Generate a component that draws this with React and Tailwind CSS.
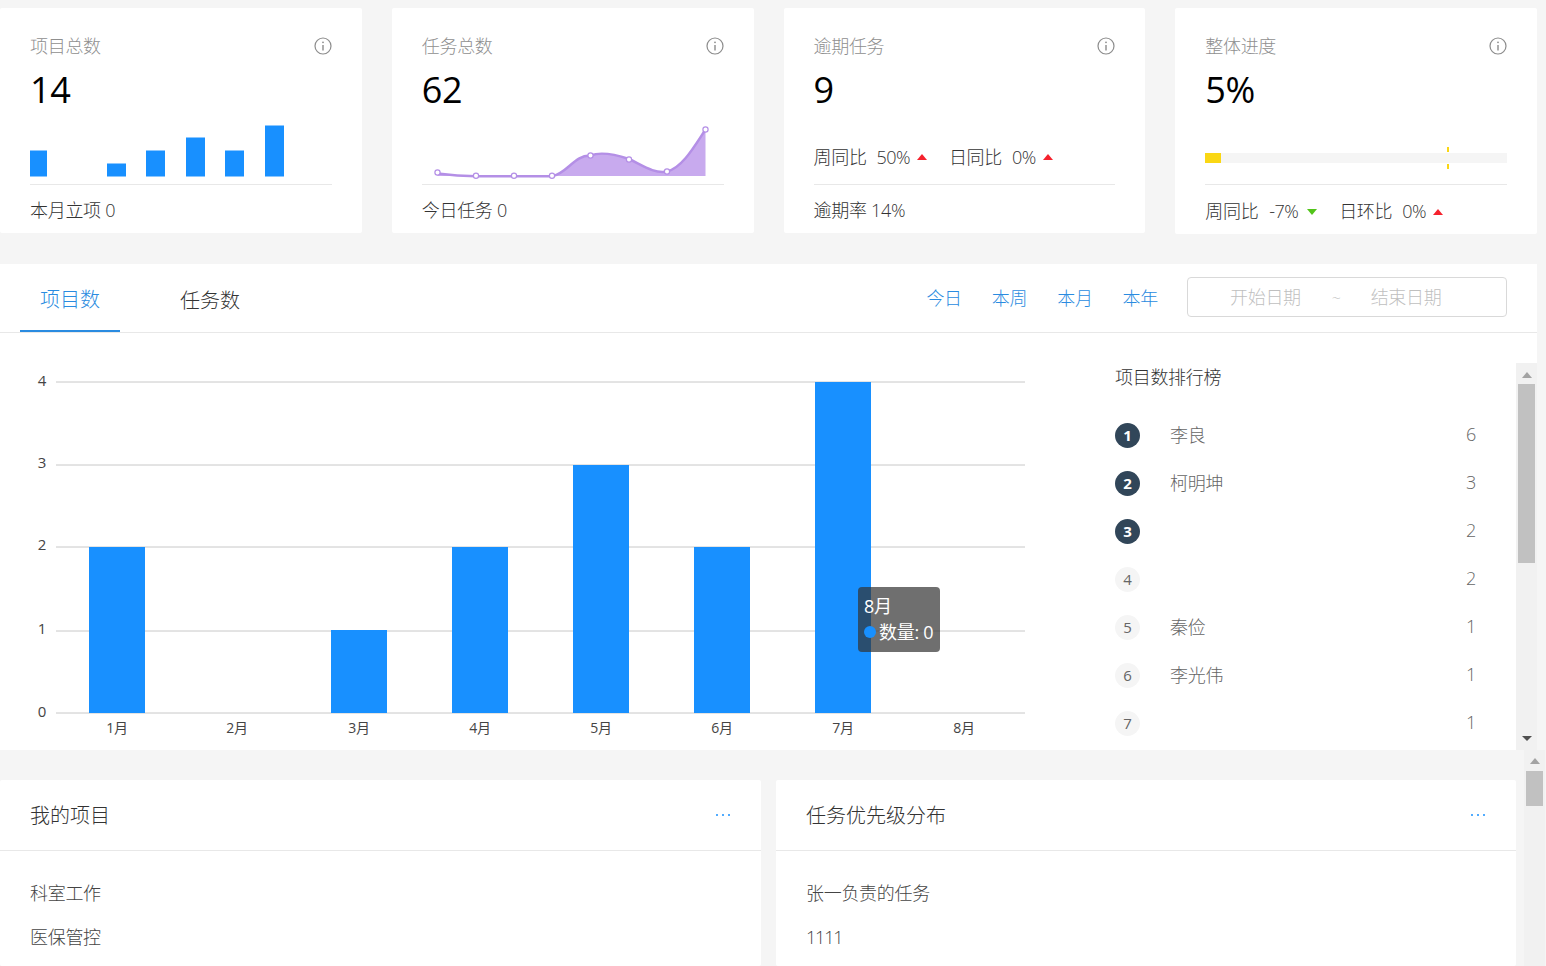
const F = "font-['Open_Sans','Noto_Sans_CJK_SC',sans-serif] tracking-[-0.3px]";

function Info() {
  return (
    <svg width="18" height="18" viewBox="0 0 18 18" fill="none" stroke="#8c8c8c" strokeWidth="1.2">
      <circle cx="9" cy="9" r="8" />
      <path d="M9 8v5.5" strokeWidth="1.4" />
      <circle cx="9" cy="5.3" r="0.9" fill="#8c8c8c" stroke="none" />
    </svg>
  );
}

function Up() {
  return <span className="inline-block w-0 h-0 border-x-[5px] border-x-transparent border-b-[6px] border-b-[#f5222d]" />;
}
function Down() {
  return <span className="inline-block w-0 h-0 border-x-[5px] border-x-transparent border-t-[6px] border-t-[#52c41a]" />;
}

function Card({ title, value, chart, footer, tall }) {
  return (
    <div className={`bg-white rounded-[2px] px-[30px] flex flex-col ${tall ? "h-[226px]" : "h-[225px]"}`}>
      <div className="flex items-center justify-between h-[24px] mt-[26px]">
        <span className="text-[18px] leading-[24px] text-[#8f8f8f] font-light">{title}</span>
        <Info />
      </div>
      <div className="h-[48px] mt-[8px] text-[36px] leading-[48px] text-black">{value}</div>
      <div className="h-[71px] border-b border-[#e8e8e8]">{chart}</div>
      <div className="flex-1 flex items-center text-[18px] text-[#333] font-light pt-[3px]">{footer}</div>
    </div>
  );
}

function MiniBars() {
  const bars = [[30, 26, 17], [107, 13, 19], [146, 26, 19], [186, 39, 19], [225, 26, 19], [265, 51, 19]];
  return (
    <svg width="302" height="70" className="block">
      {bars.map(([x, h, w]) => <rect key={x} x={x - 30} y={62.5 - h} width={w} height={h} fill="#1890ff" />)}
    </svg>
  );
}

function MiniArea() {
  const line = "M15.5 51.5 C28 53 41 54 54 54.2 L130 54.2 C145 52 152 33 168.5 33.5 C180 29 195 33 207 37 C220 43 232 52 245 49.5 C260 46 272 25 283.5 7.5";
  const pts = [[15.5, 50.5], [54, 53.8], [92, 53.8], [130, 53.8], [168.5, 33.5], [207, 37.5], [245, 49.5], [283.5, 7.5]];
  return (
    <svg width="302" height="70" className="block">
      <g transform="translate(0 8)">
        <path d={line + " L283.5 54 L15.5 54 Z"} fill="#c8aaee" />
        <path d={line} fill="none" stroke="#b48fe6" strokeWidth="2.5" />
        {pts.map(([x, y]) => <circle key={x} cx={x} cy={y} r="2.6" fill="#fff" stroke="#b48fe6" strokeWidth="1.2" />)}
      </g>
    </svg>
  );
}

function Stat({ label, value, up, wide }) {
  return (
    <span className="inline-flex items-center">
      <span>{label}</span>
      <span className={`tracking-[-0.6px] ${wide ? "ml-[11px]" : "ml-[10px]"}`}>{value}</span>
      <span className={`inline-flex ${wide ? "ml-[9px]" : "ml-[7px]"}`}>{up ? <Up /> : <Down />}</span>
    </span>
  );
}

function Progress() {
  return (
    <div className="relative h-full">
      <div className="absolute left-0 right-0 top-[39px] h-[10px] bg-[#f5f5f5]">
        <div className="w-[16px] h-[10px] bg-[#fad714]" />
      </div>
      <div className="absolute left-[242px] top-[33px] w-[2px] h-[22px] bg-[linear-gradient(#fad714_0,#fad714_5px,transparent_5px,transparent_17px,#fad714_17px)]" />
    </div>
  );
}

function BarChart() {
  const ticks = [[4, 382, 386], [3, 465, 468], [2, 547, 550], [1, 631, 634], [0, 713, 717]];
  const bars = [[89, 547], [331, 630], [452, 547], [573, 465], [694, 547], [815, 382]];
  const labels = [[117, "1月"], [237, "2月"], [359, "3月"], [480, "4月"], [601, "5月"], [722, "6月"], [843, "7月"], [964, "8月"]];
  return (
    <svg width="1060" height="417" viewBox="0 333 1060 417" className="block">
      {ticks.map(([v, y, ty]) => (
        <g key={v}>
          <line x1="56" x2="1025" y1={y} y2={y} stroke="#c8c8c8" />
          <text x="42" y={ty} textAnchor="middle" fontSize="15" fill="#444">{v}</text>
        </g>
      ))}
      {bars.map(([x, y]) => <rect key={x} x={x} y={y} width="56" height={713 - y} fill="#1890ff" />)}
      {labels.map(([x, t]) => <text key={t} x={x} y="733" textAnchor="middle" fontSize="14" fill="#444">{t}</text>)}
    </svg>
  );
}

function Rank({ n, name, v }) {
  const top = n <= 3;
  return (
    <div className="h-[48px] flex items-center shrink-0 text-[18px] text-[#666] font-light">
      <span className={`w-[25px] h-[25px] rounded-full flex items-center justify-center text-[15px] ${top ? "bg-[#314659] text-white font-bold" : "bg-[#f5f5f5] text-[#666] font-normal"}`}>{n}</span>
      <span className="ml-[30px] flex-1">{name}</span>
      <span className="mr-[40px] mt-[-2px]">{v}</span>
    </div>
  );
}

function ScrollBar({ thumbH, arrowTop, arrowDown }) {
  return (
    <div className="w-[21px] shrink-0 h-full bg-[#f1f1f1] relative">
      <span className={`absolute left-1/2 -translate-x-1/2 ${arrowTop} w-0 h-0 border-x-[5px] border-x-transparent border-b-[6px] border-b-[#a3a3a3]`} />
      <div className="absolute left-[2px] right-[2px] top-[21px] bg-[#c1c1c1]" style={{ height: thumbH }} />
      {arrowDown && <span className="absolute left-1/2 -translate-x-1/2 bottom-[9px] w-0 h-0 border-x-[5px] border-x-transparent border-t-[5px] border-t-[#505050]" />}
    </div>
  );
}

function Panel({ title, rows, cls }) {
  return (
    <div className={`bg-white rounded-[2px] ${cls}`}>
      <div className="h-[71px] border-b border-[#e8e8e8] pl-[30px] pr-[31px] flex items-center justify-between">
        <span className="text-[20px] text-[#333] font-light tracking-[0px] mt-[2px]">{title}</span>
        <span className="flex gap-[4px]">
          <i className="w-[2px] h-[2px] rounded-full bg-[#1890ff]" />
          <i className="w-[2px] h-[2px] rounded-full bg-[#1890ff]" />
          <i className="w-[2px] h-[2px] rounded-full bg-[#1890ff]" />
        </span>
      </div>
      <div className="px-[30px] pt-[20px]">
        {rows.map((r) => <div key={r} className={`h-[44px] flex items-center text-[18px] text-[#444] font-light ${r === "1111" ? "tracking-[-1.2px]" : ""}`}>{r}</div>)}
      </div>
    </div>
  );
}

export default function App() {
  return (
    <div className={`${F} w-[1546px] h-[966px] overflow-hidden bg-[#f5f5f5] relative`}>
      <div className="w-[1537px] pt-[8px] grid grid-cols-4 gap-x-[30px] items-start">
        <Card title="项目总数" value="14" chart={<MiniBars />} footer="本月立项 0" />
        <Card title="任务总数" value="62" chart={<MiniArea />} footer="今日任务 0" />
        <Card title="逾期任务" value="9"
          chart={<div className="h-full flex items-end pb-[15px] gap-[22px] text-[18px] text-[#333] font-light leading-[24px]"><Stat label="周同比" value="50%" up /><Stat label="日同比" value="0%" up /></div>}
          footer="逾期率 14%" />
        <Card tall title="整体进度" value="5%" chart={<Progress />}
          footer={<div className="flex gap-[22px] pt-[1px]"><Stat label="周同比" value="-7%" wide /><Stat label="日环比" value="0%" up /></div>} />
      </div>

      <div className="w-[1537px] h-[486px] mt-[30px] bg-white">
        <div className="h-[69px] border-b border-[#e8e8e8] pl-[20px] pr-[30px] flex items-end justify-between">
          <div className="flex text-[20px] font-light tracking-[0px]">
            <div className="w-[100px] h-[69px] pt-[7px] flex items-center justify-center text-[#2a8be0] border-b-[2px] border-[#2a8be0] -mb-px">项目数</div>
            <div className="w-[100px] h-[69px] pt-[7px] ml-[40px] flex items-center justify-center text-[#333]">任务数</div>
          </div>
          <div className="flex items-center h-[68px] text-[18px] font-light">
            <div className="flex gap-[30px] text-[#2a8be0] mt-[1px]">
              <span>今日</span><span>本周</span><span>本月</span><span>本年</span>
            </div>
            <div className="ml-[29px] w-[320px] h-[40px] mb-[2px] pt-[1px] border border-[#d9d9d9] rounded-[4px] flex items-center text-[#bfbfbf]">
              <span className="ml-[42px]">开始日期</span>
              <span className="ml-[31px] text-[16px]">~</span>
              <span className="ml-[30px]">结束日期</span>
            </div>
          </div>
        </div>
        <div className="h-[417px] flex">
          <div className="w-[1085px] shrink-0 relative">
            <BarChart />
            <div className="absolute left-[858px] top-[254px] w-[82px] h-[65px] rounded-[4px] bg-[rgba(50,50,50,0.7)] text-white text-[18px] leading-[26px] pl-[6px] pt-[6px] whitespace-nowrap">
              <div>8月</div>
              <div className="flex items-center">
                <span className="w-[12px] h-[12px] rounded-full bg-[#1890ff] mr-[3px]" />
                <span>数量: 0</span>
              </div>
            </div>
          </div>
          <div className="flex-1 flex items-stretch pt-[30px] min-w-0">
            <div className="flex-1 pl-[30px] h-full overflow-hidden flex flex-col min-w-0">
              <div className="text-[18px] text-[#333] font-light leading-[28px] h-[28px]">项目数排行榜</div>
              <div className="mt-[20px] flex flex-col">
                <Rank n={1} name="李良" v="6" />
                <Rank n={2} name="柯明坤" v="3" />
                <Rank n={3} name="" v="2" />
                <Rank n={4} name="" v="2" />
                <Rank n={5} name="秦俭" v="1" />
                <Rank n={6} name="李光伟" v="1" />
                <Rank n={7} name="" v="1" />
              </div>
            </div>
            <ScrollBar thumbH={179} arrowTop="top-[9px]" arrowDown />
          </div>
        </div>
      </div>

      <div className="flex mt-[30px] w-[1516px] gap-x-[15px]">
        <Panel cls="w-[761px] h-[186px]" title="我的项目" rows={["科室工作", "医保管控"]} />
        <Panel cls="w-[740px] h-[186px]" title="任务优先级分布" rows={["张一负责的任务", "1111"]} />
      </div>

      <div className="absolute left-[1524px] top-[750px] w-[21px] h-[216px]">
        <ScrollBar thumbH={35} arrowTop="top-[8px]" />
      </div>
    </div>
  );
}
